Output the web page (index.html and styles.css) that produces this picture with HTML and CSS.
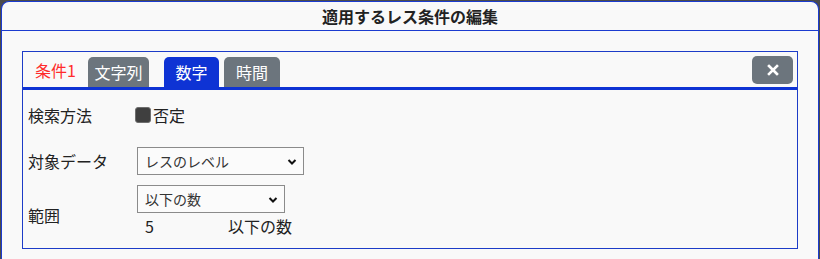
FILE: index.html
```html
<!DOCTYPE html>
<html lang="ja">
<head>
<meta charset="utf-8">
<title>適用するレス条件の編集</title>
<link rel="stylesheet" href="styles.css">
</head>
<body>
<div class="dialog">
  <div class="dialog-header">適用するレス条件の編集</div>
  <div class="dialog-body">
    <div class="panel">
      <div class="tabbar">
        <span class="cond-name">条件1</span>
        <span class="tab tab-narrow">文字列</span>
        <span class="tab tab-active">数字</span>
        <span class="tab">時間</span>
        <button class="close-btn" type="button" aria-label="閉じる">
          <svg width="12" height="12" viewBox="0 0 12 12"><path d="M2 2 L10 10 M10 2 L2 10" stroke="#fff" stroke-width="2.6" stroke-linecap="square"/></svg>
        </button>
      </div>
      <div class="form">
        <div class="row row-method">
          <span class="label">検索方法</span>
          <label class="check"><span class="checkbox"></span>否定</label>
        </div>
        <div class="row row-target">
          <span class="label">対象データ</span>
          <div class="select select-wide">
            <span class="select-text">レスのレベル</span>
            <svg class="chev" width="10" height="8" viewBox="0 0 10 8"><path d="M1.5 2 L5 5.5 L8.5 2" fill="none" stroke="#111" stroke-width="2"/></svg>
          </div>
        </div>
        <div class="row row-range">
          <span class="label label-range">範囲</span>
          <div class="range-col">
            <div class="select select-narrow">
              <span class="select-text">以下の数</span>
              <svg class="chev" width="10" height="8" viewBox="0 0 10 8"><path d="M1.5 2 L5 5.5 L8.5 2" fill="none" stroke="#111" stroke-width="2"/></svg>
            </div>
            <div class="range-value"><span class="num">5</span><span>以下の数</span></div>
          </div>
        </div>
      </div>
    </div>
  </div>
</div>
</body>
</html>
```
FILE: styles.css
```css
html, body {
  margin: 0;
  padding: 0;
}
body {
  background: #4b4b4b;
  font-family: "Noto Sans CJK JP", "Noto Sans", sans-serif;
  color: #222;
  padding: 1px 0 0 1px;
  height: 259px;
  box-sizing: border-box;
  overflow: hidden;
}
.dialog {
  width: 818px;
  height: 258px;
  box-sizing: border-box;
  background: #f9f9f9;
  border: 1px solid #1b3bd0;
  border-bottom: none;
  border-radius: 8px 8px 0 0;
}
.dialog-header {
  height: 28px;
  line-height: 28px;
  text-align: center;
  font-size: 16px;
  font-weight: bold;
  color: #222;
  border-bottom: 1px solid #1b3bd0;
}
.dialog-body {
  padding: 20px 20px 0 20px;
}
.panel {
  border: 1px solid #1d3cc8;
  height: 198px;
  box-sizing: border-box;
}
.tabbar {
  display: flex;
  align-items: flex-end;
  padding-top: 5px;
  height: 30px;
  border-bottom: 3px solid #0e33d4;
  white-space: nowrap;
}
.cond-name {
  color: #ff2b2b;
  font-size: 16px;
  line-height: 26px;
  padding: 0 12px;
  align-self: flex-start;
}
.tab {
  background: #6c757d;
  color: #fff;
  font-size: 16px;
  height: 30px;
  line-height: 30px;
  border-radius: 5px 5px 0 0;
  margin-right: 5px;
  text-align: center;
  box-sizing: border-box;
  width: 56px;
}
.tab-narrow {
  width: 61px;
  margin-right: 15px;
}
.tab-active {
  background: #0e33d4;
  width: 55px;
}
.close-btn {
  margin-left: auto;
  margin-right: 4px;
  align-self: flex-start;
  margin-top: -1px;
  width: 41px;
  height: 28px;
  border: none;
  border-radius: 5px;
  background: #6c757d;
  display: flex;
  align-items: center;
  justify-content: center;
  padding: 0;
}
.form {
  padding: 13px 0 0 5px;
  font-size: 16px;
}
.row {
  display: flex;
  align-items: center;
}
.label {
  width: 109px;
  flex: none;
}
.row-method {
  height: 24px;
}
.check {
  display: flex;
  align-items: center;
  margin-left: -2px;
}
.checkbox {
  width: 14px;
  height: 14px;
  background: #3f3f3f;
  border: 1px solid #6e6e6e;
  border-radius: 3px;
  margin-right: 2px;
}
.row-target {
  margin-top: 20px;
}
.select {
  position: relative;
  height: 28px;
  box-sizing: border-box;
  border: 1px solid #8b8b8b;
  background: #fbfbfb;
  font-size: 14px;
  line-height: 26px;
  padding-left: 7px;
  color: #333;
}
.select-wide {
  width: 167px;
}
.select-narrow {
  width: 148px;
}
.chev {
  position: absolute;
  right: 6px;
  top: 10px;
}
.row-range {
  margin-top: 10px;
  align-items: flex-start;
}
.label-range {
  margin-top: 18px;
}
.range-col {
  display: flex;
  flex-direction: column;
}
.range-value {
  display: flex;
  height: 24px;
  line-height: 24px;
  margin-top: 1px;
}
.num {
  width: 83px;
  padding-left: 8px;
}
```
